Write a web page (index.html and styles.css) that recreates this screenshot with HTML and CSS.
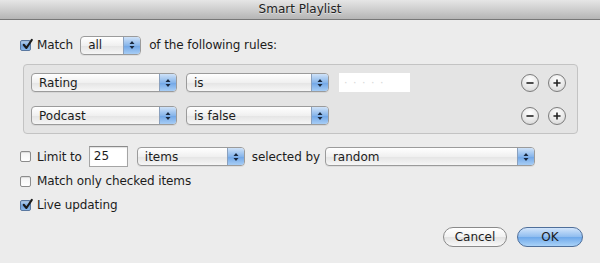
FILE: index.html
```html
<!DOCTYPE html>
<html>
<head>
<meta charset="utf-8">
<link rel="stylesheet" href="styles.css">
</head>
<body>
<div class="window">
  <div class="titlebar">Smart Playlist</div>
  <div class="content">
    <div class="row match-row">
      <span class="check on"><svg viewBox="0 0 12 12"><path d="M2.5 6.2 L5 9.2 L10 1.8" fill="none" stroke="#1a1a1a" stroke-width="1.9" stroke-linecap="round" stroke-linejoin="round"/></svg></span>
      <span class="label">Match</span>
      <span class="popup w-all"><span class="ptext">all</span><span class="arrows"><svg viewBox="0 0 8 12"><path d="M4 2 L6.5 5 L1.5 5 Z M4 10 L6.5 7 L1.5 7 Z" fill="#1a2a40"/></svg></span></span>
      <span class="label">of the following rules:</span>
    </div>
    <div class="rules">
      <div class="rule">
        <span class="popup w-field"><span class="ptext">Rating</span><span class="arrows"><svg viewBox="0 0 8 12"><path d="M4 2 L6.5 5 L1.5 5 Z M4 10 L6.5 7 L1.5 7 Z" fill="#1a2a40"/></svg></span></span>
        <span class="popup w-op"><span class="ptext">is</span><span class="arrows"><svg viewBox="0 0 8 12"><path d="M4 2 L6.5 5 L1.5 5 Z M4 10 L6.5 7 L1.5 7 Z" fill="#1a2a40"/></svg></span></span>
        <span class="stars">· · · · ·</span>
        <span class="spacer"></span>
        <span class="circ"><svg viewBox="0 0 18 18"><path d="M5 9 H13" stroke="#222" stroke-width="1.8"/></svg></span>
        <span class="circ"><svg viewBox="0 0 18 18"><path d="M5 9 H13 M9 5 V13" stroke="#222" stroke-width="1.8"/></svg></span>
      </div>
      <div class="rule">
        <span class="popup w-field"><span class="ptext">Podcast</span><span class="arrows"><svg viewBox="0 0 8 12"><path d="M4 2 L6.5 5 L1.5 5 Z M4 10 L6.5 7 L1.5 7 Z" fill="#1a2a40"/></svg></span></span>
        <span class="popup w-op"><span class="ptext">is false</span><span class="arrows"><svg viewBox="0 0 8 12"><path d="M4 2 L6.5 5 L1.5 5 Z M4 10 L6.5 7 L1.5 7 Z" fill="#1a2a40"/></svg></span></span>
        <span class="spacer"></span>
        <span class="circ"><svg viewBox="0 0 18 18"><path d="M5 9 H13" stroke="#222" stroke-width="1.8"/></svg></span>
        <span class="circ"><svg viewBox="0 0 18 18"><path d="M5 9 H13 M9 5 V13" stroke="#222" stroke-width="1.8"/></svg></span>
      </div>
    </div>
    <div class="row limit-row">
      <span class="check"></span>
      <span class="label">Limit to</span>
      <span class="textfield">25</span>
      <span class="popup w-items"><span class="ptext">items</span><span class="arrows"><svg viewBox="0 0 8 12"><path d="M4 2 L6.5 5 L1.5 5 Z M4 10 L6.5 7 L1.5 7 Z" fill="#1a2a40"/></svg></span></span>
      <span class="label">selected by</span>
      <span class="popup w-random"><span class="ptext">random</span><span class="arrows"><svg viewBox="0 0 8 12"><path d="M4 2 L6.5 5 L1.5 5 Z M4 10 L6.5 7 L1.5 7 Z" fill="#1a2a40"/></svg></span></span>
    </div>
    <div class="row opt-row">
      <span class="check"></span>
      <span class="label">Match only checked items</span>
    </div>
    <div class="row opt-row">
      <span class="check on"><svg viewBox="0 0 12 12"><path d="M2.5 6.2 L5 9.2 L10 1.8" fill="none" stroke="#1a1a1a" stroke-width="1.9" stroke-linecap="round" stroke-linejoin="round"/></svg></span>
      <span class="label">Live updating</span>
    </div>
    <div class="buttons">
      <span class="btn cancel">Cancel</span>
      <span class="btn ok">OK</span>
    </div>
  </div>
</div>
</body>
</html>
```
FILE: styles.css
```css
html, body {
  margin: 0;
  padding: 0;
}
body {
  width: 600px;
  height: 263px;
  overflow: hidden;
  background: #ececec;
  font-family: "DejaVu Sans", "Liberation Sans", sans-serif;
  font-size: 12px;
  color: #1c1c1c;
}
.window {
  width: 600px;
  height: 263px;
  display: flex;
  flex-direction: column;
}
.titlebar {
  height: 19px;
  line-height: 19px;
  text-align: center;
  font-size: 12px;
  color: #222;
  background: linear-gradient(#e6e6e6, #c9c9c9 60%, #b5b5b5);
  border-bottom: 1px solid #777;
  text-shadow: 0 1px 0 rgba(255,255,255,0.5);
}
.content {
  display: flex;
  flex-direction: column;
  padding: 0 17px 0 20px;
}
.row {
  display: flex;
  align-items: center;
}
.label {
  white-space: nowrap;
  letter-spacing: -0.1px;
}
.match-row {
  margin-top: 16px;
  height: 18px;
}
.check {
  width: 9px;
  height: 9px;
  border: 1px solid #8c8c8c;
  border-radius: 2px;
  background: linear-gradient(#f4f4f4, #ffffff);
  box-shadow: inset 0 1px 1px rgba(0,0,0,0.1);
  margin-right: 6px;
  position: relative;
  flex: none;
}
.check.on {
  background: linear-gradient(#bcd6f3, #6ea1dc 55%, #8ab8ea);
  border-color: #5a78a0;
}
.check svg {
  position: absolute;
  left: 0;
  top: -3px;
  width: 13px;
  height: 13px;
}
.popup {
  display: flex;
  align-items: center;
  height: 17px;
  border: 1px solid #9b9b9b;
  border-radius: 4px;
  background: linear-gradient(#ffffff, #f0f0f0 50%, #e4e4e4 51%, #f6f6f6);
  box-shadow: 0 1px 0 rgba(0,0,0,0.06);
  overflow: hidden;
  flex: none;
}
.ptext {
  flex: 1;
  padding-left: 7px;
  white-space: nowrap;
}
.arrows {
  width: 16px;
  height: 17px;
  border-left: 1px solid #8aa0bd;
  background: linear-gradient(#cfe2f8, #87b5ea 50%, #6fa5e6 51%, #a7cdf5);
  display: flex;
  align-items: center;
  justify-content: center;
}
.arrows svg {
  width: 8px;
  height: 12px;
}
.w-all { width: 59px; margin: 0 8px 0 7px; }
.rules {
  margin: 10px 0 0 3px;
  width: 555px;
  height: 70px;
  border: 1px solid #c3c3c3;
  border-radius: 4px;
  background: #e4e4e4;
  display: flex;
  flex-direction: column;
  gap: 14px;
  padding-top: 8px;
  box-sizing: border-box;
}
.rule {
  display: flex;
  align-items: center;
  height: 19px;
  padding-left: 7px;
  padding-right: 11px;
}
.w-field { width: 144px; }
.w-op { width: 141px; margin-left: 9px; }
.stars {
  width: 71px;
  height: 19px;
  margin-left: 10px;
  background: #fff;
  color: #d8d8d8;
  font-size: 11px;
  line-height: 19px;
  padding-left: 5px;
  box-sizing: border-box;
  letter-spacing: 1px;
}
.spacer { flex: 1; }
.circ {
  width: 16px;
  height: 16px;
  border: 1px solid #7c7c7c;
  border-radius: 50%;
  background: radial-gradient(circle at 50% 30%, #ffffff, #e6e6e6 60%, #cfcfcf);
  margin-left: 9px;
  display: flex;
}
.circ svg {
  width: 16px;
  height: 16px;
}
.limit-row {
  margin-top: 12px;
  height: 21px;
}
.textfield {
  width: 39px;
  height: 21px;
  margin-left: 7px;
  border: 1px solid #a5a5a5;
  border-top-color: #8a8a8a;
  background: #fff;
  box-sizing: border-box;
  padding-left: 4px;
  line-height: 19px;
  box-shadow: inset 0 1px 1px rgba(0,0,0,0.12);
}
.w-items { width: 106px; margin: 0 7px 0 9px; }
.w-random { width: 208px; margin-left: 5px; }
.opt-row {
  margin-top: 4px;
  height: 20px;
}
.buttons {
  display: flex;
  justify-content: flex-end;
  gap: 10px;
  margin-top: 12px;
}
.btn {
  height: 18px;
  line-height: 18px;
  border-radius: 10px;
  text-align: center;
  font-size: 12px;
  flex: none;
}
.cancel {
  width: 62px;
  border: 1px solid #8a8a8a;
  background: linear-gradient(#ffffff, #f2f2f2 50%, #e2e2e2 51%, #f8f8f8);
}
.ok {
  width: 64px;
  border: 1px solid #4f6f9a;
  background: linear-gradient(#d2e5fb, #8fbcef 50%, #6ea8ea 51%, #a9d2f8);
}
```
